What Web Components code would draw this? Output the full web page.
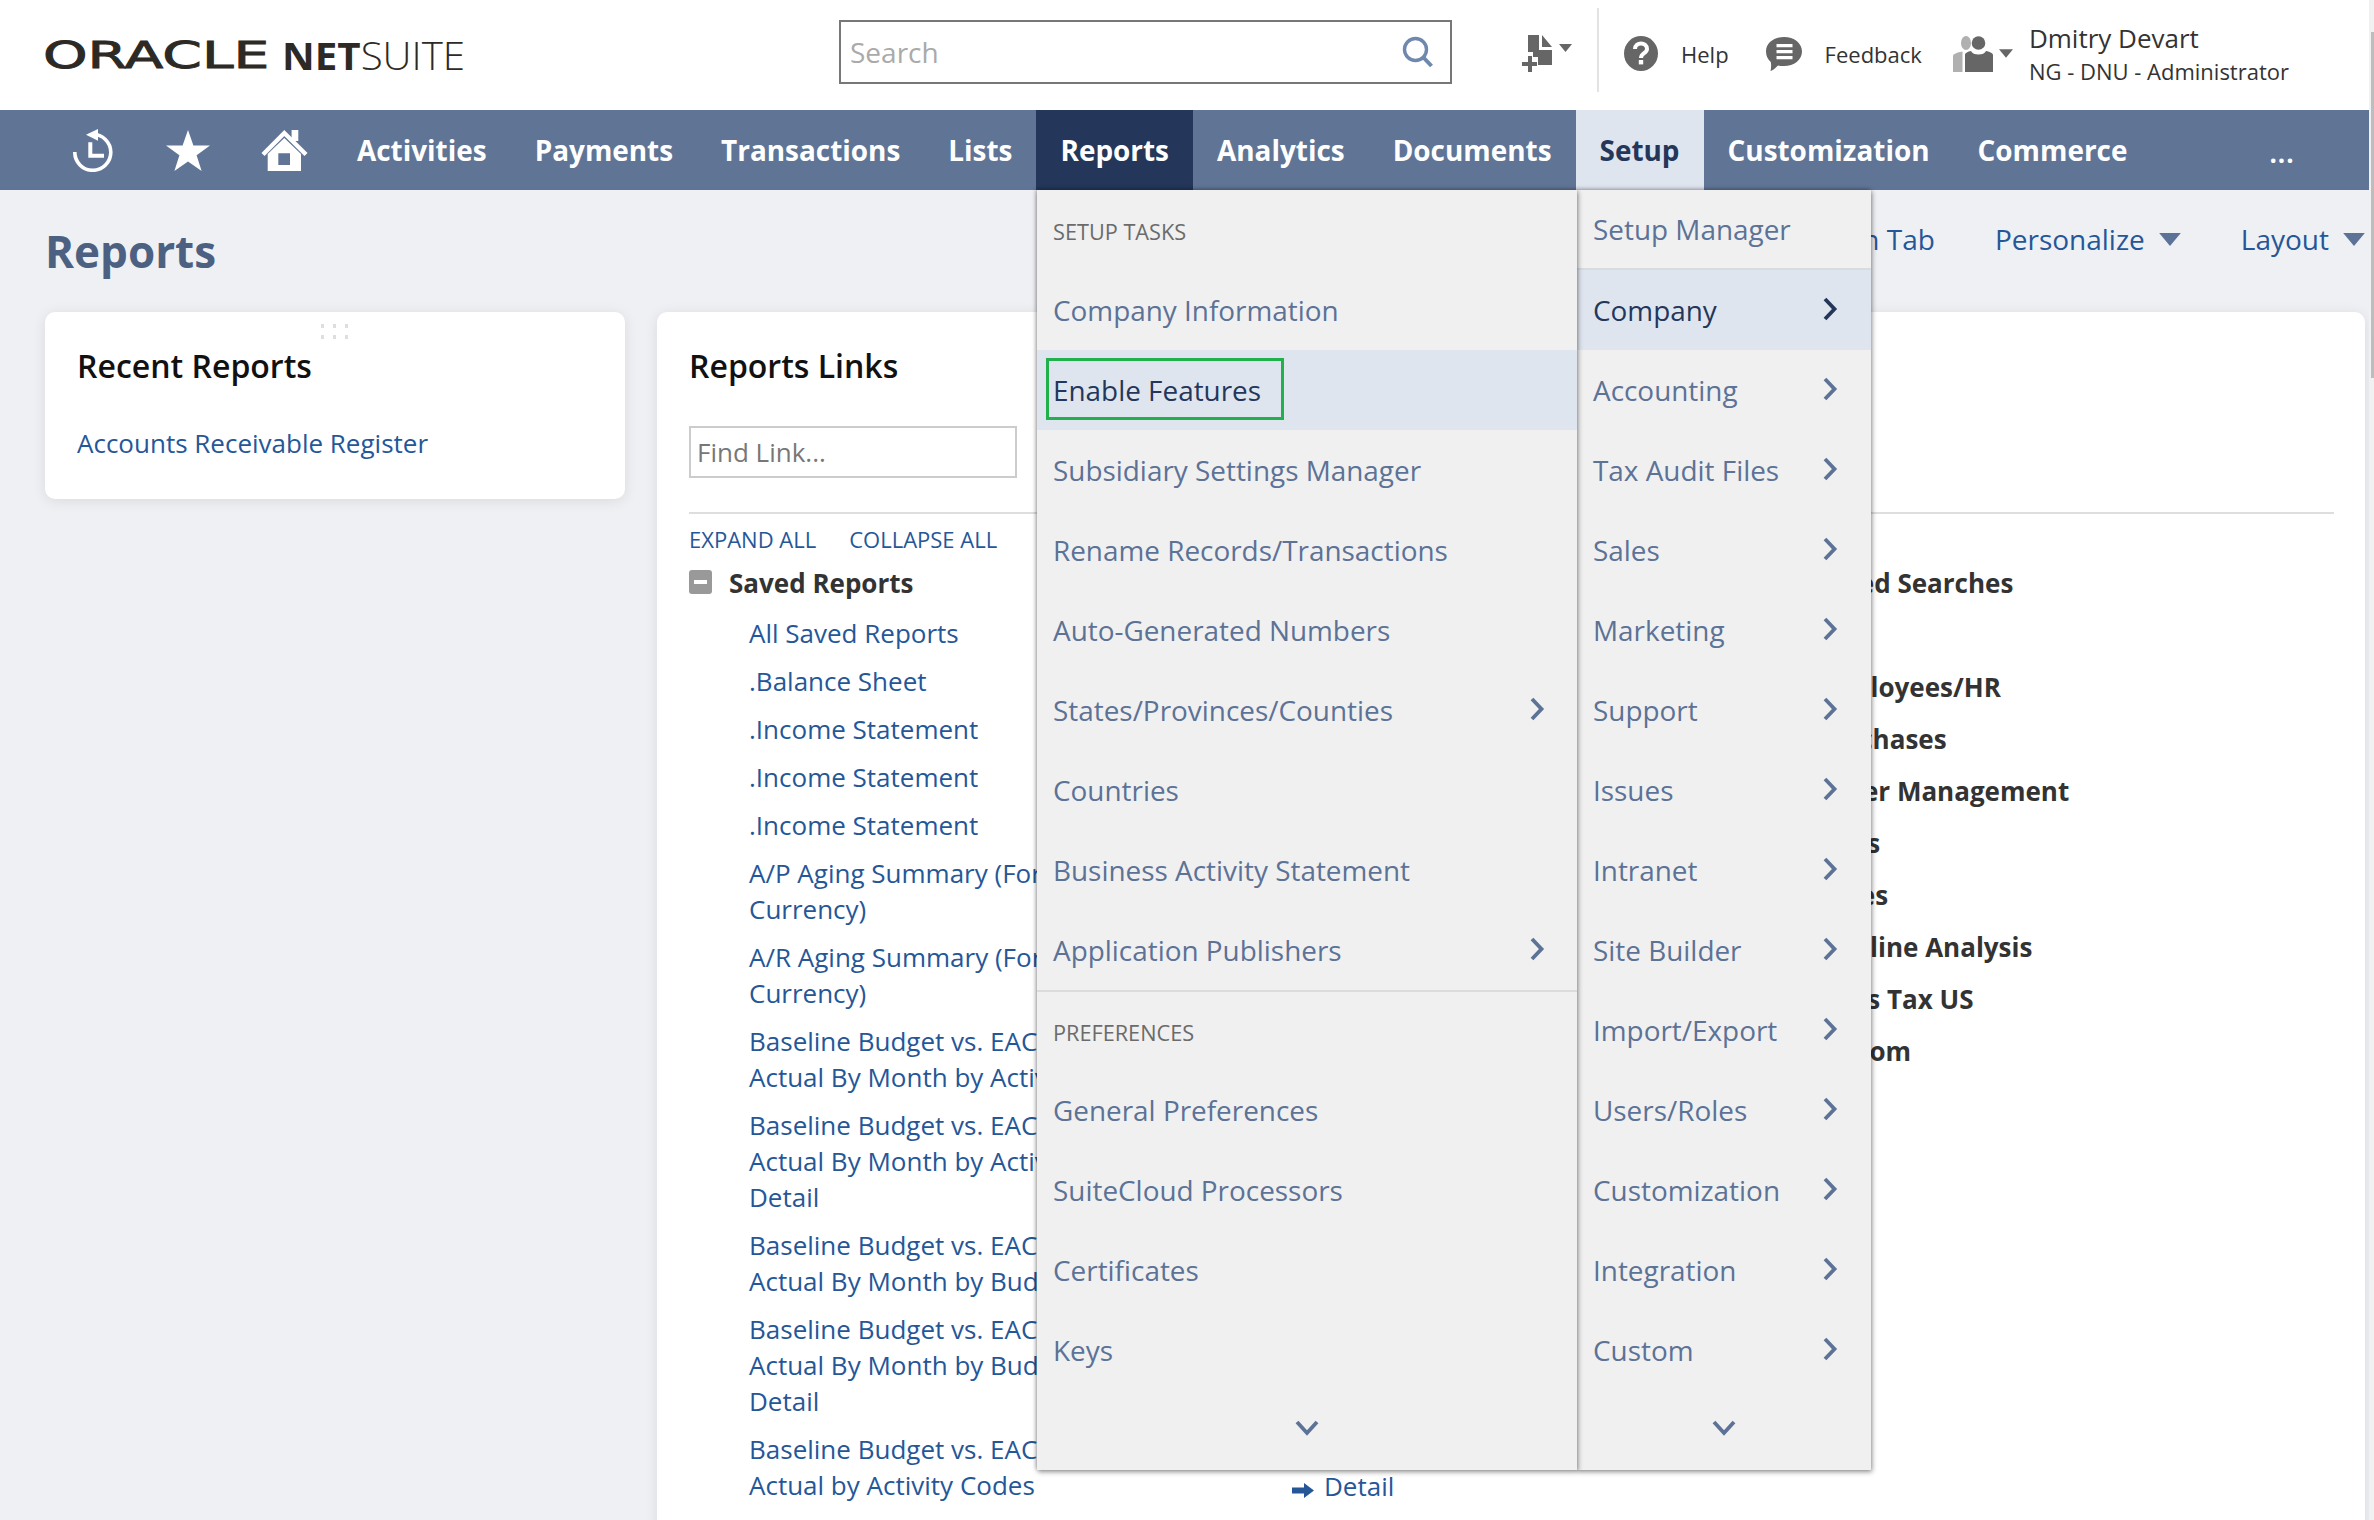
<!doctype html>
<html lang="en">
<head>
<meta charset="utf-8">
<title>Reports</title>
<style>
  html, body { margin: 0; height: 100%; overflow: hidden; }
  body { background: #eff0f4; font-family: "Open Sans", "Noto Sans", sans-serif; }
</style>
</head>
<body>
<ns-app></ns-app>
<script>
const chevron = (color) => `<svg width="16" height="24" viewBox="0 0 16 24"><path d="M3 2l9.500 10L3 22" fill="none" stroke="${color}" stroke-width="3.800"/></svg>`;
const caret = (w, h, color) => `<svg width="${w}" height="${h}" viewBox="0 0 10 6"><path d="M0 0h10L5 6z" fill="${color}"/></svg>`;

class NsLogo extends HTMLElement {
  constructor() {
    super();
    this.attachShadow({ mode: "open" }).innerHTML = `
      <style>
        :host { display: flex; align-items: center; color: #2d2a26; padding-left: 43px; box-sizing: border-box; }
        .oracle { font-family: "DejaVu Sans", sans-serif; font-size: 38px; line-height: 1; width: 223px; white-space: nowrap; transform: scaleX(1.49); transform-origin: left center; -webkit-text-stroke: .9px #2d2a26; }
        .suite { margin-left: 15.500px; font: 300 38px "Open Sans", sans-serif; white-space: nowrap; transform: scaleX(1.06); transform-origin: left center; }
        b { font-weight: 700; }
      </style>
      <span class="oracle">ORACLE</span><span class="suite"><b>NET</b>SUITE</span>`;
  }
}
customElements.define("ns-logo", NsLogo);

class NsHeader extends HTMLElement {
  constructor() {
    super();
    this.attachShadow({ mode: "open" }).innerHTML = `
      <style>
        :host { display: flex; align-items: center; box-sizing: border-box; height: 110px; padding-bottom: 3px; background: #fff; color: #333; font-size: 22px; }
        ns-logo { width: 839px; flex: none; margin-top: 3px; }
        .search { flex: none; box-sizing: border-box; width: 613px; height: 64px; margin-bottom: 3px; border: 2px solid #777; display: flex; align-items: center; justify-content: space-between; padding: 0 16px 0 9px; color: #aaa; font-size: 28px; }
        .new { margin-left: 70px; display: flex; align-items: center; gap: 7px; width: 50px; }
        .new svg:last-child { margin-bottom: 12px; }
        .sep { width: 2px; height: 84px; background: #e3e3e3; margin: 0 25px 7px; flex: none; }
        .item { display: flex; align-items: center; }
        .help span { margin-left: 23px; }
        .feedback { margin-left: 37px; }
        .feedback span { margin-left: 23px; }
        .roles { margin-left: 31px; display: flex; align-items: center; gap: 6px; }
        .user { margin-left: 16px; line-height: 1; }
        .name { font-size: 26px; margin-bottom: 9px; }
      </style>
      <ns-logo></ns-logo>
      <div class="search">Search
        <svg width="32" height="32" viewBox="0 0 32 32"><circle cx="13.500" cy="13.500" r="11" fill="none" stroke="#6f88ae" stroke-width="3.400"/><path d="M21 21l8.500 9" stroke="#6f88ae" stroke-width="4" fill="none"/></svg>
      </div>
      <div class="new">
        <svg width="30" height="37" viewBox="0 0 30 37"><path d="M6 0H17V15H30V30H16V22H11V17H6z" fill="#666"/><path d="M20 0L30 12H20z" fill="#666"/><path d="M6 21h4v6h5v4h-5v6H6v-6H0v-4h6z" fill="#666"/></svg>
        ${caret(13, 8, "#666")}
      </div>
      <div class="sep"></div>
      <div class="item help">
        <svg width="34" height="35" viewBox="0 0 34 35"><ellipse cx="17" cy="17.500" rx="17" ry="17.500" fill="#666"/><path d="M11 13c0-7.500 12-7.500 12 0 0 4.500-6 4-6 9" fill="none" stroke="#fff" stroke-width="4"/><rect x="14.800" y="24" width="4.400" height="4.400" fill="#fff"/></svg>
        <span>Help</span>
      </div>
      <div class="item feedback">
        <svg width="36" height="34" viewBox="0 0 36 34"><path d="M18 0c10 0 18 6 18 14.500S28 29 18 29c-2.500 0-4.500 0-6-.6C9.500 31 7 33 4.500 34c.8-3 .8-6 .3-9C2 22.500 0 19 0 14.500 0 6 8 0 18 0z" fill="#666"/><path d="M10.500 7h16v3.200h-16zM10.500 13h16v3.200h-16zM10.500 19h16v3.200h-16z" fill="#fff"/></svg>
        <span>Feedback</span>
      </div>
      <div class="roles">
        <svg width="40" height="36" viewBox="0 0 40 36"><ellipse cx="13" cy="7" rx="5" ry="7" fill="#b0b0b0"/><path d="M0 36V20c0-2 4-3.500 9.500-4.500V36z" fill="#b0b0b0"/><circle cx="25.500" cy="7" r="6.800" fill="#666"/><path d="M12 36V19c0-2 3-3.500 6-4 1 2.500 4 3.500 7.500 3.500s6.500-1 7.500-3.500c3 .5 7 2 7 4v17z" fill="#666"/></svg>
        ${caret(14, 9, "#666")}
      </div>
      <div class="user"><div class="name">Dmitry Devart</div><div>NG - DNU - Administrator</div></div>`;
  }
}
customElements.define("ns-header", NsHeader);

class NsNavItem extends HTMLElement {
  constructor() {
    super();
    this.attachShadow({ mode: "open" }).innerHTML = `
      <style>
        :host { display: flex; align-items: center; height: 100%; padding: 0 24px; color: #fff; font-size: var(--nav-size); font-weight: 700; white-space: nowrap; }
        :host([active]) { background: #24375a; }
        :host([open]) { background: #dfe5ef; color: #24375a; }
      </style>
      <slot></slot>`;
  }
}
customElements.define("ns-nav-item", NsNavItem);

class NsNav extends HTMLElement {
  constructor() {
    super();
    this.attachShadow({ mode: "open" }).innerHTML = `
      <style>
        :host { --nav-size: 27.920px; display: flex; align-items: center; height: 80px; background: #607596; margin-right: 5px; }
        .icons { display: flex; align-items: center; padding-left: 73px; flex: none; width: 333px; box-sizing: border-box; gap: 53px; }
        .icons svg { flex: none; }
        .icons svg:last-child { margin-left: -2px; }
        .more { margin-left: 118px; color: #fff; font-weight: 700; font-size: 26px; letter-spacing: 1px; padding-top: 6px; }
      </style>
      <div class="icons">
        <svg width="40" height="43" viewBox="0 0 40 43"><path d="M19.500 5.300A18 18 0 1 1 1.800 23" fill="none" stroke="#fff" stroke-width="3.600"/><path d="M13 5.700L25 0v11.700z" fill="#fff"/><path d="M17.300 13.300v13.400H31" fill="none" stroke="#fff" stroke-width="4"/></svg>
        <svg width="44" height="41" viewBox="0 0 44 41"><path d="M22 0l5.400 15.600H44L30.600 25.300 35.600 41 22 31.400 8.400 41l5-15.700L0 15.600h16.600z" fill="#fff"/></svg>
        <svg width="47" height="42" viewBox="0 0 47 42"><path d="M2 25.500L23.300 4l21.700 21.500" fill="none" stroke="#fff" stroke-width="4.400"/><path d="M30.600 1h6.700v11h-6.700z" fill="#fff"/><path d="M6.700 25L23.300 9 40 25v17H6.700zM17.300 24.300V36H29V24.300z" fill="#fff" fill-rule="evenodd"/></svg>
      </div>
      <ns-nav-item>Activities</ns-nav-item>
      <ns-nav-item>Payments</ns-nav-item>
      <ns-nav-item>Transactions</ns-nav-item>
      <ns-nav-item>Lists</ns-nav-item>
      <ns-nav-item active>Reports</ns-nav-item>
      <ns-nav-item>Analytics</ns-nav-item>
      <ns-nav-item>Documents</ns-nav-item>
      <ns-nav-item open>Setup</ns-nav-item>
      <ns-nav-item>Customization</ns-nav-item>
      <ns-nav-item>Commerce</ns-nav-item>
      <span class="more">...</span>`;
  }
}
customElements.define("ns-nav", NsNav);

class NsMenuRow extends HTMLElement {
  constructor() {
    super();
    const arrow = this.hasAttribute("arrow");
    const dark = this.hasAttribute("hover");
    this.attachShadow({ mode: "open" }).innerHTML = `
      <style>
        :host { display: flex; align-items: center; justify-content: space-between; height: 80px; box-sizing: border-box; padding: 0 var(--row-arrow, 32px) 0 var(--row-pad, 16px); color: #5c7296; font-size: 27.900px; white-space: nowrap; }
        :host([hover]) { background: #dfe5ef; color: #24375a; }
        :host([label]) { color: #6b6b6b; font-size: 21.700px; padding-top: 2px; }
        :host([rule]) { border-top: 2px solid #dcdcdc; }
        svg { display: block; margin-top: -2px; }
      </style>
      <span><slot></slot></span>${arrow ? chevron(dark ? "#24375a" : "#5c7296") : ""}`;
  }
}
customElements.define("ns-menu-row", NsMenuRow);

class NsMenu extends HTMLElement {
  constructor() {
    super();
    this.attachShadow({ mode: "open" }).innerHTML = `
      <style>
        :host { display: block; position: absolute; top: 190px; height: 1280px; box-sizing: border-box; background: #f0f0f0; box-shadow: 1px 2px 5px rgba(0,0,0,.4), -1px -1px 4px rgba(0,0,0,.28); }
        .down { position: absolute; left: 0; right: 0; bottom: 34px; display: flex; justify-content: center; }
      </style>
      <slot></slot>
      <div class="down"><svg width="24" height="16" viewBox="0 0 24 16"><path d="M2 2l10 11L22 2" fill="none" stroke="#5c7296" stroke-width="3.800"/></svg></div>`;
  }
}
customElements.define("ns-menu", NsMenu);

class NsCard extends HTMLElement {
  constructor() {
    super();
    this.attachShadow({ mode: "open" }).innerHTML = `
      <style>
        :host { display: block; position: relative; box-sizing: border-box; background: #fff; border-radius: 10px; box-shadow: 0 2px 14px rgba(0,0,0,.09); padding: 32px 32px; }
        h2 { margin: 0; font-size: 32px; font-weight: 600; line-height: 44px; color: #111; }
      </style>
      <h2></h2><slot></slot>`;
    this.shadowRoot.querySelector("h2").textContent = this.getAttribute("title");
  }
}
customElements.define("ns-card", NsCard);

class NsLinkGroup extends HTMLElement {
  constructor() {
    super();
    this.attachShadow({ mode: "open" }).innerHTML = `
      <style>
        :host { display: block; }
        .head { display: flex; align-items: center; height: 36px; font-weight: 700; font-size: 26px; color: #333; white-space: nowrap; }
        .box { width: 23px; height: 24px; border-radius: 3px; background: #999; margin-right: 17px; display: flex; align-items: center; justify-content: center; flex: none; margin-top: -3px; }
        .box i { display: block; width: 13px; height: 4px; background: #fff; }
        .list { padding: 14px 0 0 60px; display: flex; flex-direction: column; gap: 12px; color: #255798; font-size: 26px; line-height: 36px; white-space: nowrap; }
      </style>
      <div class="head"><span class="box"><i></i></span><span></span></div>
      <div class="list"><slot></slot></div>`;
    this.shadowRoot.querySelector(".head span:last-child").textContent = this.getAttribute("name");
  }
}
customElements.define("ns-link-group", NsLinkGroup);

class NsApp extends HTMLElement {
  constructor() {
    super();
    this.attachShadow({ mode: "open" }).innerHTML = `
      <style>
        :host { display: block; position: relative; width: 2374px; height: 1520px; overflow: hidden; }
        .scroll { position: absolute; top: 0; right: 0; width: 5px; height: 1520px; background: #f1f1f1; }
        .scroll i { display: block; width: 3px; height: 346px; margin: 32px 0 0 2px; background: #bdbdbd; }
        .title { display: flex; align-items: center; justify-content: space-between; height: 122px; padding: 0 9px 0 45px; }
        h1 { margin: 0; font-size: 44px; font-weight: 700; color: #4c6181; }
        .tools { display: flex; gap: 60px; color: #255798; font-size: 28px; margin-bottom: 24px; }
        .tools span { display: flex; align-items: center; gap: 14px; }
        .main { display: flex; gap: 32px; align-items: flex-start; padding: 0 9px 0 45px; }
        .recent { width: 580px; height: 187px; flex: none; padding-left: 32px; }
        .dots { position: absolute; left: 276px; top: 12px; display: grid; grid-template-columns: repeat(3, 3px); gap: 7px 9px; }
        .dots i { height: 4px; background: #dedede; }
        .recent a { display: block; margin-top: 37px; color: #255798; font-size: 26px; line-height: 36px; }
        .links { flex: 1; height: 1300px; }
        .find { box-sizing: border-box; width: 328px; height: 52px; border: 2px solid #ccc; margin-top: 38px; display: flex; align-items: center; padding-left: 6px; font-size: 26px; color: #777; }
        .rule { height: 2px; background: #dedede; margin: 34px -1px 0 0; }
        .bar { display: flex; gap: 33px; color: #255798; font-size: 22px; line-height: 30px; margin-top: 10px; }
        .cols { display: flex; margin-top: 11px; }
        .left { width: 348px; flex: none; overflow: hidden; }
        .mid { width: 777px; box-sizing: border-box; flex: none; padding: 903px 0 0 255px; color: #255798; font-size: 26px; line-height: 36px; }
        .mid svg { vertical-align: -2px; margin-right: 10px; }
        .right { display: flex; flex-direction: column; gap: 16px; font-weight: 700; font-size: 26px; line-height: 36px; color: #333; white-space: nowrap; }
        .menu-a { left: 1037px; width: 540px; z-index: 2; }
        .menu-b { left: 1577px; width: 294px; --row-pad: 16px; --row-arrow: 33px; z-index: 1; }
        .mark { position: absolute; left: 9px; top: 168px; width: 238px; height: 62px; box-sizing: border-box; border: 3px solid #21b04b; }
      </style>
      <ns-header></ns-header>
      <ns-nav></ns-nav>
      <div class="title">
        <h1>Reports</h1>
        <div class="tools">
          <span>Set as Main Tab</span>
          <span>Personalize ${caret(22, 13, "#5c7296")}</span>
          <span>Layout ${caret(22, 13, "#5c7296")}</span>
        </div>
      </div>
      <div class="main">
        <ns-card class="recent" title="Recent Reports">
          <div class="dots"><i></i><i></i><i></i><i></i><i></i><i></i></div>
          <a>Accounts Receivable Register</a>
        </ns-card>
        <ns-card class="links" title="Reports Links">
          <div class="find">Find Link...</div>
          <div class="rule"></div>
          <div class="bar"><span>EXPAND ALL</span><span>COLLAPSE ALL</span></div>
          <div class="cols">
            <div class="left">
              <ns-link-group name="Saved Reports">
                <div>All Saved Reports</div>
                <div>.Balance Sheet</div>
                <div>.Income Statement</div>
                <div>.Income Statement</div>
                <div>.Income Statement</div>
                <div>A/P Aging Summary (Foreign<br>Currency)</div>
                <div>A/R Aging Summary (Foreign<br>Currency)</div>
                <div>Baseline Budget vs. EAC vs.<br>Actual By Month by Activity</div>
                <div>Baseline Budget vs. EAC vs.<br>Actual By Month by Activity<br>Detail</div>
                <div>Baseline Budget vs. EAC vs.<br>Actual By Month by Budget</div>
                <div>Baseline Budget vs. EAC vs.<br>Actual By Month by Budget<br>Detail</div>
                <div>Baseline Budget vs. EAC vs.<br>Actual by Activity Codes</div>
              </ns-link-group>
            </div>
            <div class="mid"><svg width="22" height="15" viewBox="0 0 22 15"><path d="M0 4.500h12V0l10 7.500-10 7.500v-4.500H0z" fill="#255798"/></svg>Detail</div>
            <div class="right">
              <div>Saved Searches</div>
              <div style="margin-top:52px">Employees/HR</div>
              <div>Purchases</div>
              <div>Order Management</div>
              <div>Sales</div>
              <div>Taxes</div>
              <div>Pipeline Analysis</div>
              <div>Sales Tax US</div>
              <div>Syscom</div>
            </div>
          </div>
        </ns-card>
      </div>
      <ns-menu class="menu-a">
        <ns-menu-row label>SETUP TASKS</ns-menu-row>
        <ns-menu-row>Company Information</ns-menu-row>
        <ns-menu-row hover>Enable Features</ns-menu-row>
        <ns-menu-row>Subsidiary Settings Manager</ns-menu-row>
        <ns-menu-row>Rename Records/Transactions</ns-menu-row>
        <ns-menu-row>Auto-Generated Numbers</ns-menu-row>
        <ns-menu-row arrow>States/Provinces/Counties</ns-menu-row>
        <ns-menu-row>Countries</ns-menu-row>
        <ns-menu-row>Business Activity Statement</ns-menu-row>
        <ns-menu-row arrow>Application Publishers</ns-menu-row>
        <ns-menu-row label rule>PREFERENCES</ns-menu-row>
        <ns-menu-row>General Preferences</ns-menu-row>
        <ns-menu-row>SuiteCloud Processors</ns-menu-row>
        <ns-menu-row>Certificates</ns-menu-row>
        <ns-menu-row>Keys</ns-menu-row>
        <div class="mark"></div>
      </ns-menu>
      <ns-menu class="menu-b">
        <ns-menu-row style="border-bottom:2px solid #d8dbe2">Setup Manager</ns-menu-row>
        <ns-menu-row arrow hover>Company</ns-menu-row>
        <ns-menu-row arrow>Accounting</ns-menu-row>
        <ns-menu-row arrow>Tax Audit Files</ns-menu-row>
        <ns-menu-row arrow>Sales</ns-menu-row>
        <ns-menu-row arrow>Marketing</ns-menu-row>
        <ns-menu-row arrow>Support</ns-menu-row>
        <ns-menu-row arrow>Issues</ns-menu-row>
        <ns-menu-row arrow>Intranet</ns-menu-row>
        <ns-menu-row arrow>Site Builder</ns-menu-row>
        <ns-menu-row arrow>Import/Export</ns-menu-row>
        <ns-menu-row arrow>Users/Roles</ns-menu-row>
        <ns-menu-row arrow>Customization</ns-menu-row>
        <ns-menu-row arrow>Integration</ns-menu-row>
        <ns-menu-row arrow>Custom</ns-menu-row>
      </ns-menu>
      <div class="scroll"><i></i></div>`;
  }
}
customElements.define("ns-app", NsApp);
</script>
</body>
</html>
